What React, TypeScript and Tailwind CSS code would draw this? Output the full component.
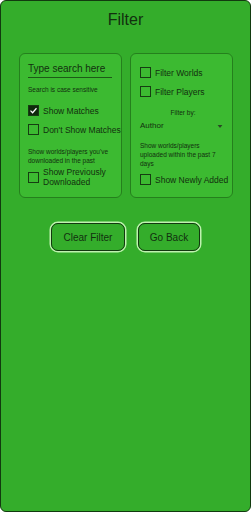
import type { ReactNode } from "react";

const font = { fontFamily: '"Liberation Sans", Arial, sans-serif' };

function Box({ checked = false }: { checked?: boolean }) {
  return (
    <span
      className={`grid h-[11px] w-[11px] shrink-0 place-items-center border border-[#163d12] ${
        checked ? "bg-[#0f2a0c]" : "bg-transparent"
      }`}
    >
      {checked && (
        <svg viewBox="0 0 12 12" className="h-[9px] w-[9px]">
          <path d="M2 6.2 L4.8 9 L10 3" fill="none" stroke="white" strokeWidth="1.6" />
        </svg>
      )}
    </span>
  );
}

function Check({ label, checked, className = "" }: { label: ReactNode; checked?: boolean; className?: string }) {
  return (
    <div className={`flex items-center gap-[4px] ${className}`}>
      <Box checked={checked} />
      <span className="whitespace-nowrap text-[8.5px] leading-[10px] text-[#12300f]">{label}</span>
    </div>
  );
}

export default function App() {
  return (
    <div
      style={font}
      className="flex h-[512px] w-[251px] flex-col rounded-[6px] border border-[#123a0f] bg-[#34ad2b] text-[#12300f]"
    >
      <h1 className="pt-[9px] text-center text-[16px] leading-[20px] font-medium">Filter</h1>

      <div className="mt-[23px] flex gap-[8px] pl-[18px] pr-[18px]">
        {/* left panel */}
        <div className="h-[145px] w-[103px] rounded-[6px] border border-[#25801d] bg-[#3cba31] pl-[8px] pr-[3px]">
          <div className="mt-[9px] mr-[6px] border-b border-[#1c5a16] pb-[2px] text-[10px] leading-[12px]">
            Type search here
          </div>
          <p className="mt-[7px] text-[6.5px] leading-[9px]">Search is case sensitive</p>
          <Check className="mt-[11px]" checked label="Show Matches" />
          <Check className="mt-[8px]" label="Don't Show Matches" />
          <p className="mt-[12px] text-[6.5px] leading-[9px]">
            Show worlds/players you've
            <br />
            downloaded in the past
          </p>
          <Check
            className="mt-[2px]"
            label={
              <>
                Show Previously
                <br />
                Downloaded
              </>
            }
          />
        </div>

        {/* right panel */}
        <div className="h-[145px] w-[103px] rounded-[6px] border border-[#25801d] bg-[#3cba31] pl-[9px] pr-[6px]">
          <Check className="mt-[13px]" label="Filter Worlds" />
          <Check className="mt-[8px]" label="Filter Players" />
          <p className="mt-[11px] text-center text-[6.5px] leading-[9px]">Filter by:</p>
          <div className="mt-[4px] flex items-center justify-between pr-[3px]">
            <span className="text-[8px] leading-[10px]">Author</span>
            <svg viewBox="0 0 8 5" className="h-[3px] w-[6px]">
              <path d="M0 0 H8 L4 5 Z" fill="#2a4a25" />
            </svg>
          </div>
          <p className="mt-[10px] text-[6.5px] leading-[9px]">
            Show worlds/players
            <br />
            uploaded within the past 7
            <br />
            days
          </p>
          <Check className="mt-[6px]" label="Show Newly Added" />
        </div>
      </div>

      <div className="mt-[25px] flex justify-center gap-[13px]">
        <button className="h-[28px] w-[74px] rounded-[7px] border border-[#12380f] text-[10px] ring-[1.5px] ring-[#bff2b0]">
          Clear Filter
        </button>
        <button className="h-[28px] w-[62px] rounded-[7px] border border-[#12380f] text-[10px] ring-[1.5px] ring-[#bff2b0]">
          Go Back
        </button>
      </div>
    </div>
  );
}
